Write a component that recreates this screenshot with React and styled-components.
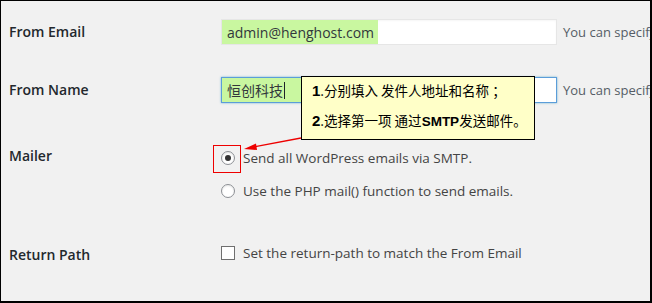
import React from "react";
import styled, { createGlobalStyle } from "styled-components";

const Global = createGlobalStyle`
  html, body { margin: 0; padding: 0; background: #fff; }
  body { font-family: "Open Sans", "Noto Sans", sans-serif; }
`;

const Frame = styled.div`
  position: relative;
  box-sizing: border-box;
  width: 652px;
  height: 303px;
  background: #f1f1f1;
  border-style: solid;
  border-color: #000;
  border-width: 1px 2px 2px 1px;
  overflow: hidden;
  padding-top: 18px;
`;

const Row = styled.div`
  display: grid;
  grid-template-columns: 220px 1fr;
  align-items: ${(p) => p.$align || "center"};
  margin-top: ${(p) => p.$top || 0}px;
`;

const Label = styled.div`
  padding-left: 8px;
  font-size: 14px;
  font-weight: 600;
  color: #23282d;
  line-height: 16px;
  margin-top: ${(p) => p.$shift || 0}px;
`;

const FieldLine = styled.div`
  display: flex;
  align-items: center;
  gap: 6px;
  white-space: nowrap;
`;

const Field = styled.div`
  box-sizing: border-box;
  flex: none;
  width: 336px;
  height: 26px;
  background: #fff;
  border: 1px solid ${(p) => (p.$focus ? "#5b9dd9" : "#e6e6e6")};
  box-shadow: ${(p) =>
    p.$focus ? "0 0 2px rgba(30,140,190,0.6)" : "inset 0 1px 2px rgba(0,0,0,0.04)"};
  display: flex;
  align-items: stretch;
  overflow: hidden;
`;

const Fill = styled.span`
  display: inline-flex;
  align-items: center;
  background: #c9f7a0;
  padding: 0 4px 0 5px;
  min-width: ${(p) => p.$min || 0}px;
  font-size: 14px;
  color: #32373c;
  font-family: "Open Sans", "Noto Sans CJK SC", sans-serif;
`;

const Caret = styled.span`
  display: inline-block;
  width: 1px;
  height: 17px;
  background: #1d2327;
  margin-left: 1px;
`;

const Hint = styled.span`
  font-size: 13px;
  color: #555d66;
`;

const Options = styled.div`
  display: flex;
  flex-direction: column;
  gap: 11px;
`;

const Option = styled.label`
  display: flex;
  align-items: center;
  height: 22px;
  font-size: 13.5px;
  color: #444;
  gap: 8px;
  white-space: nowrap;
`;

const Radio = styled.span`
  box-sizing: border-box;
  flex: none;
  width: 14px;
  height: 14px;
  border-radius: 50%;
  border: 1px solid #8c8f94;
  background: #fff;
  display: inline-flex;
  align-items: center;
  justify-content: center;
  box-shadow: inset 0 1px 2px rgba(0,0,0,0.1);
  &::after {
    content: "";
    width: 6px;
    height: 6px;
    border-radius: 50%;
    background: ${(p) => (p.$checked ? "#333" : "transparent")};
  }
`;

const Check = styled.span`
  box-sizing: border-box;
  flex: none;
  width: 14px;
  height: 14px;
  border: 1px solid #6f6f6f;
  background: #fff;
`;

const Note = styled.div`
  position: absolute;
  left: 300px;
  top: 75px;
  box-sizing: border-box;
  width: 234px;
  height: 64px;
  background: #ffffc8;
  border: 1px solid #000;
  padding: 4px 0 0 10px;
  display: flex;
  flex-direction: column;
  gap: 11px;
  font-family: "Noto Sans CJK SC", sans-serif;
  font-size: 13.5px;
  line-height: 18px;
  color: #000;
  white-space: nowrap;
`;

const Strong = styled.b`
  font-family: "Liberation Sans", "Noto Sans CJK SC", sans-serif;
  font-weight: 700;
  font-size: ${(p) => p.$size || 13.5}px;
`;

const Marker = styled.div`
  position: absolute;
  left: 212px;
  top: 144px;
  width: 28px;
  height: 28px;
  box-sizing: border-box;
  border: 1px solid #e00;
`;

const Arrow = styled.svg`
  position: absolute;
  left: 0;
  top: 0;
  pointer-events: none;
`;

export default function App() {
  return (
    <>
      <Global />
      <Frame>
        <Row>
          <Label>From Email</Label>
          <FieldLine>
            <Field>
              <Fill>admin@henghost.com</Fill>
            </Field>
            <Hint>You can specify</Hint>
          </FieldLine>
        </Row>
        <Row $top={32}>
          <Label>From Name</Label>
          <FieldLine>
            <Field $focus>
              <Fill $min={80}>
                恒创科技
                <Caret />
              </Fill>
            </Field>
            <Hint>You can specify</Hint>
          </FieldLine>
        </Row>
        <Row $top={44} $align="start">
          <Label $shift={1}>Mailer</Label>
          <Options>
            <Option>
              <Radio $checked />
              Send all WordPress emails via SMTP.
            </Option>
            <Option>
              <Radio />
              Use the PHP mail() function to send emails.
            </Option>
          </Options>
        </Row>
        <Row $top={40}>
          <Label $shift={3}>Return Path</Label>
          <Option>
            <Check />
            Set the return-path to match the From Email
          </Option>
        </Row>

        <Note>
          <div>
            <Strong $size={15}>1</Strong>.分别填入 发件人地址和名称 ；
          </div>
          <div>
            <Strong $size={15}>2</Strong>.选择第一项 通过<Strong>SMTP</Strong>发送邮件。
          </div>
        </Note>
        <Marker />
        <Arrow width="652" height="303" viewBox="0 0 652 303">
          <line x1="300" y1="137" x2="252" y2="146" stroke="#e00" strokeWidth="1.3" />
          <polygon points="243,148 255,142.5 256,149" fill="#e00" />
        </Arrow>
      </Frame>
    </>
  );
}
